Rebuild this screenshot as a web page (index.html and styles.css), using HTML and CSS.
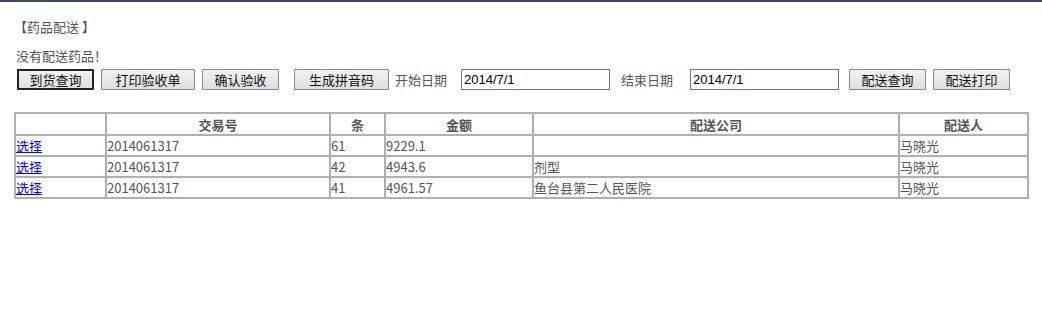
FILE: index.html
```html
<!DOCTYPE html>
<html lang="zh-CN">

<head>
    <meta charset="UTF-8">
    <title>药品配送</title>
    <link rel="stylesheet" href="styles.css">
</head>

<body>
    <div class="page">
        <h3 class="title">【药品配送 】</h3>
        <p class="msg">没有配送药品！</p>
        <div class="toolbar">
            <button class="btn btn-default">到货查询</button>
            <button class="btn btn-wide">打印验收单</button>
            <button class="btn">确认验收</button>
            <button class="btn btn-wide gap-left">生成拼音码</button>
            <span class="label">开始日期</span>
            <input type="text" class="date" value="2014/7/1">
            <span class="label label2">结束日期</span>
            <input type="text" class="date" value="2014/7/1">
            <button class="btn gap-small">配送查询</button>
            <button class="btn">配送打印</button>
        </div>

        <table class="grid">
            <thead>
                <tr>
                    <th class="c1"></th>
                    <th class="c2">交易号</th>
                    <th class="c3">条</th>
                    <th class="c4">金额</th>
                    <th class="c5">配送公司</th>
                    <th class="c6">配送人</th>
                </tr>
            </thead>
            <tbody>
                <tr>
                    <td><a href="#">选择</a></td>
                    <td>2014061317</td>
                    <td>61</td>
                    <td>9229.1</td>
                    <td></td>
                    <td>马晓光</td>
                </tr>
                <tr>
                    <td><a href="#">选择</a></td>
                    <td>2014061317</td>
                    <td>42</td>
                    <td>4943.6</td>
                    <td>剂型</td>
                    <td>马晓光</td>
                </tr>
                <tr>
                    <td><a href="#">选择</a></td>
                    <td>2014061317</td>
                    <td>41</td>
                    <td>4961.57</td>
                    <td>鱼台县第二人民医院</td>
                    <td>马晓光</td>
                </tr>
            </tbody>
        </table>
    </div>
</body>

</html>
```

FILE: styles.css
```css
* {
    margin: 0;
    padding: 0;
    box-sizing: border-box;
}

body {
    background-color: #fff;
    border-top: 2px solid #3d4e63;
    font-family: "Noto Sans CJK SC", "DejaVu Sans", sans-serif;
    font-size: 13px;
    color: #555;
}

.page {
    padding: 15px 12px 0 16px;
}

.title {
    font-size: 13px;
    font-weight: normal;
    height: 20px;
    line-height: 20px;
    margin-left: -2px;
}

.msg {
    margin-top: 10px;
    height: 18px;
    line-height: 18px;
}

.toolbar {
    display: flex;
    align-items: center;
    height: 22px;
    margin-top: 3px;
}

.btn {
    font-family: "Noto Sans CJK SC", sans-serif;
    font-size: 13px;
    color: #111;
    height: 21px;
    width: 77px;
    margin-right: 7px;
    border: 1px solid #8a8a8a;
    border-radius: 1px;
    background: linear-gradient(#f2f2f2, #dedede);
    line-height: 17px;
}

.btn:first-child {
    margin-left: 1px;
}

.btn-default {
    border: 2px solid #222;
}

.btn-wide {
    width: 94px;
}

.gap-left {
    margin-left: 8px;
    width: 95px;
    margin-right: 6px;
}

.gap-small {
    margin-left: 10px;
}

.label {
    width: 66px;
    color: #555;
}

.label2 {
    margin-left: 11px;
    width: 69px;
}

.date {
    width: 149px;
    height: 21px;
    border: 1px solid #777;
    font-family: "Liberation Sans", Arial, sans-serif;
    font-size: 13px;
    color: #000;
    padding: 0 2px;
}

.grid {
    margin-top: 22px;
    margin-left: -2px;
    width: 1015px;
    border: 1px solid #b0b0b0;
    border-spacing: 0;
    table-layout: fixed;
}

.grid th,
.grid td {
    border: 1px solid #b0b0b0;
    height: 21px;
    padding: 0;
    text-align: left;
    font-weight: normal;
    white-space: nowrap;
}

.grid th {
    height: 22px;
    font-weight: bold;
    text-align: center;
}

.grid a {
    color: #00f;
}

.c1 {
    width: 91px;
}

.c2 {
    width: 224px;
}

.c3 {
    width: 55px;
}

.c4 {
    width: 148px;
}

.c5 {
    width: 366px;
}
```
